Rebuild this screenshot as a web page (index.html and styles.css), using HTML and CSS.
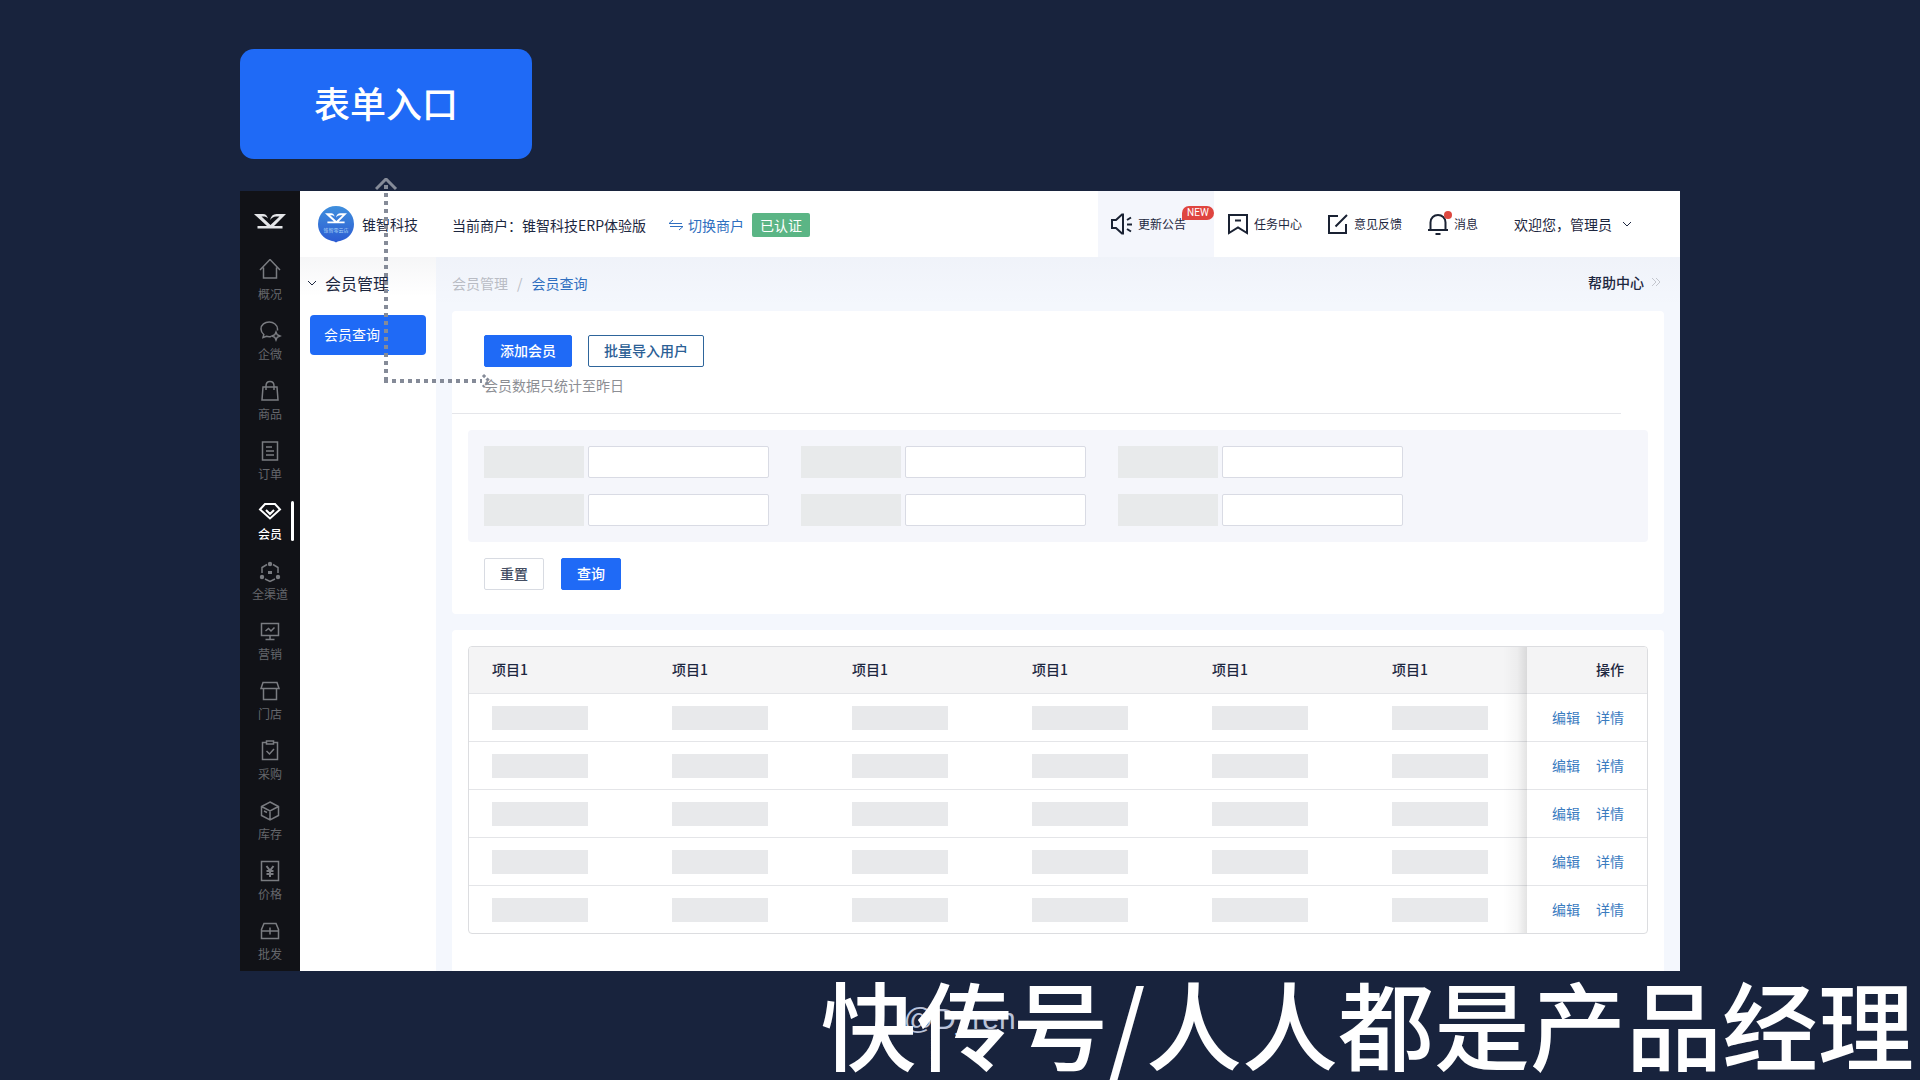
FILE: index.html
```html
<!DOCTYPE html>
<html lang="zh-CN">
<head>
<meta charset="utf-8">
<meta name="viewport" content="width=device-width, initial-scale=1">
<title>会员查询</title>
<link rel="stylesheet" href="styles.css">
</head>
<body>
<svg class="sprite" aria-hidden="true">
  <symbol id="mark" viewBox="0 0 32 15"><path d="M0 0h9c2.500 0 4 1.200 5 4.500C12.500 3.200 11.500 2.600 9.500 2.600H7.500L16.500 11l9-8.400H22c-2.500 0-4 1.200-6 3.400C17 2 19 0 22.500 0H32L20 12h8.500v2.500h-25V12H13L3 2.800C2 1.900 1 1 0 0Z"/></symbol>
</svg>

<div class="stage">
  <h1 class="callout">表单入口</h1>

  <div class="app">
    <nav class="rail" aria-label="主导航">
      <a class="rail-logo" href="#" aria-label="首页"><svg width="32" height="15"><use href="#mark"/></svg></a>
      <a class="rail-item" href="#"><svg class="icon" viewBox="0 0 24 24"><path d="M2 11 12 .5l10 10.500M5.500 8.500V19h13V8.500"/></svg>概况</a>
      <a class="rail-item" href="#"><svg class="icon" viewBox="0 0 24 24"><path d="M13 17.500c-1.500.4-3 .3-4.500-.2L5 18.500l.8-3C4 14 3 12 3 10c0-4.200 3.800-7 8.200-7s8.300 3 8.300 7v1.500M18 13l1.200 2.800L22 17l-2.800 1.200L18 21l-1.200-2.800L14 17l2.800-1.200Z"/></svg>企微</a>
      <a class="rail-item" href="#"><svg class="icon" viewBox="0 0 24 24"><path d="M5 8h14l1 13H4ZM8 11V7c0-2.500 1.500-4.500 4-4.500s4 2 4 4.500v4"/></svg>商品</a>
      <a class="rail-item" href="#"><svg class="icon" viewBox="0 0 24 24"><path d="M4.500 3h15v18h-15ZM8 8h6M8 12h8M8 16h8"/></svg>订单</a>
      <a class="rail-item active" href="#" aria-current="page"><svg class="icon bold" viewBox="0 0 24 24"><path d="M7 5h10l5 5.500-10 9-10-9ZM8 11l4 4 4-4"/></svg>会员</a>
      <a class="rail-item" href="#"><svg class="icon" viewBox="0 0 24 24"><path d="m9 5.500-5 3V14M15 5.500l5 3V14M7 20l5 2.500L17 20"/><g class="solid"><circle cx="12" cy="5" r="2.200"/><circle cx="4" cy="18" r="2.200"/><circle cx="20" cy="18" r="2.200"/><path d="M10 12h4v3h-4Z"/></g></svg>全渠道</a>
      <a class="rail-item" href="#"><svg class="icon" viewBox="0 0 24 24"><path d="M3.500 4.500h17v12h-17ZM12 16.500v4M7.500 20.500h9M7.500 12 10.500 9.500 13 12l3.500-3.500"/></svg>营销</a>
      <a class="rail-item" href="#"><svg class="icon" viewBox="0 0 24 24"><path d="M5 3.500h14l2 6H3ZM5.500 9.500v11h13v-11"/></svg>门店</a>
      <a class="rail-item" href="#"><svg class="icon" viewBox="0 0 24 24"><path d="M8 3.500H4.500v17h15v-17H16M8.500 2h7v3h-7ZM8.500 12l3 3 4.500-5"/></svg>采购</a>
      <a class="rail-item" href="#"><svg class="icon" viewBox="0 0 24 24"><path d="m12 3 8.500 4.500v9L12 21l-8.500-4.500v-9ZM3.500 7.500 12 12l8.500-4.500M12 12v9M6 12l3 1.500"/></svg>库存</a>
      <a class="rail-item" href="#"><svg class="icon" viewBox="0 0 24 24"><path d="M3.500 2.500h17v19h-17Z"/><path class="thick" d="m8.500 7 3.500 4.500L15.500 7M12 11.500V18M8.500 12h7M8.500 15h7"/></svg>价格</a>
      <a class="rail-item" href="#"><svg class="icon" viewBox="0 0 24 24"><path d="M6 4.500h12l2.500 6v9h-17v-9ZM3.500 12h17M12 8.500v7"/></svg>批发</a>
    </nav>

    <div class="body">
      <header class="topbar">
        <a class="brand" href="#">
          <svg width="36" height="38" viewBox="0 0 36 38">
            <defs><linearGradient id="shield" x1="0" y1="0" x2="0" y2="1"><stop offset="0" stop-color="#3f8fdd"/><stop offset="1" stop-color="#2c5bd2"/></linearGradient></defs>
            <path d="M18 1a18 18 0 0 1 18 18c0 8-5 14.500-12.500 16.500-2 .5-4 1-5.500 2-1.500-1-3.500-1.500-5.500-2C5 33.500 0 27 0 19A18 18 0 0 1 18 1Z" fill="url(#shield)"/>
            <use href="#mark" x="7" y="8" width="22" height="11" fill="#fff"/>
            <text class="brand-tag" x="18" y="27" text-anchor="middle">锥智零云店</text>
          </svg>
          <span>锥智科技</span>
        </a>
        <div class="merchant">
          <span>当前商户：锥智科技ERP体验版</span>
          <a class="switch" href="#"><svg width="16" height="16" viewBox="0 0 16 16"><path d="M1 6.500h13M1 6.500 5 3M15 9.500H2M15 9.500 11 13"/></svg>切换商户</a>
          <span class="certified">已认证</span>
        </div>
        <div class="tools">
          <a class="tool highlighted" href="#"><svg class="icon" viewBox="0 0 24 24"><path d="M2 8h4l6-5.500h1v19h-1L6 16H2ZM17 8l4-2.500M17 12.500h5M17 17l4 2.500"/></svg>更新公告<span class="new">NEW</span></a>
          <a class="tool" href="#"><svg class="icon" viewBox="0 0 24 24"><path d="M3 3h18v18l-9-5.500L3 21ZM9 8.500h6"/></svg>任务中心</a>
          <a class="tool" href="#"><svg class="icon" viewBox="0 0 24 24"><path d="M12 4H3v17h17v-9M9.500 14.500 21 3"/></svg>意见反馈</a>
          <a class="tool" href="#"><svg class="icon" viewBox="0 0 24 24"><path d="M4.500 18v-7.500C4.500 6 8 3 12 3s7.500 3 7.500 7.500V18M2 18h20M9.500 22h5"/><circle class="dot" cx="22" cy="3" r="4"/></svg>消息</a>
          <button class="user" type="button">欢迎您，管理员<svg width="10" height="10" viewBox="0 0 10 10"><path d="M1 3l4 4 4-4"/></svg></button>
        </div>
      </header>

      <div class="workspace">
        <aside class="submenu">
          <button class="submenu-title" type="button"><svg width="10" height="10" viewBox="0 0 10 10"><path d="M1 3l4 4 4-4"/></svg>会员管理</button>
          <a class="submenu-item" href="#">会员查询</a>
        </aside>

        <main class="content">
          <div class="crumbs">
            <nav class="crumb-path" aria-label="位置"><a href="#">会员管理</a><span>/</span><a class="current" href="#">会员查询</a></nav>
            <a class="help" href="#">帮助中心<svg width="12" height="12" viewBox="0 0 12 12"><path d="M2 2l4 4-4 4M6 2l4 4-4 4"/></svg></a>
          </div>

          <section class="card">
            <div class="actions">
              <button class="btn primary" type="button">添加会员</button>
              <button class="btn outline" type="button">批量导入用户</button>
            </div>
            <p class="note">会员数据只统计至昨日</p>
            <hr class="rule">
            <form class="filter">
              <div class="fields">
                <div class="field"><label for="f1"></label><input id="f1" type="text"></div>
                <div class="field"><label for="f2"></label><input id="f2" type="text"></div>
                <div class="field"><label for="f3"></label><input id="f3" type="text"></div>
                <div class="field"><label for="f4"></label><input id="f4" type="text"></div>
                <div class="field"><label for="f5"></label><input id="f5" type="text"></div>
                <div class="field"><label for="f6"></label><input id="f6" type="text"></div>
              </div>
              <div class="submit">
                <button class="btn plain" type="reset">重置</button>
                <button class="btn primary" type="button">查询</button>
              </div>
            </form>
          </section>

          <section class="card results">
            <table>
              <thead>
                <tr><th>项目1</th><th>项目1</th><th>项目1</th><th>项目1</th><th>项目1</th><th class="last">项目1</th><th class="ops">操作</th></tr>
              </thead>
              <tbody>
                <tr><td><i></i></td><td><i></i></td><td><i></i></td><td><i></i></td><td><i></i></td><td><i></i></td><td class="ops"><a href="#">编辑</a><a href="#">详情</a></td></tr>
                <tr><td><i></i></td><td><i></i></td><td><i></i></td><td><i></i></td><td><i></i></td><td><i></i></td><td class="ops"><a href="#">编辑</a><a href="#">详情</a></td></tr>
                <tr><td><i></i></td><td><i></i></td><td><i></i></td><td><i></i></td><td><i></i></td><td><i></i></td><td class="ops"><a href="#">编辑</a><a href="#">详情</a></td></tr>
                <tr><td><i></i></td><td><i></i></td><td><i></i></td><td><i></i></td><td><i></i></td><td><i></i></td><td class="ops"><a href="#">编辑</a><a href="#">详情</a></td></tr>
                <tr><td><i></i></td><td><i></i></td><td><i></i></td><td><i></i></td><td><i></i></td><td><i></i></td><td class="ops"><a href="#">编辑</a><a href="#">详情</a></td></tr>
              </tbody>
            </table>
          </section>
        </main>
      </div>
    </div>
  </div>

  <svg class="connector" width="116" height="216" viewBox="0 0 116 216" aria-hidden="true">
    <path class="head" d="M1 11 11 1l10 10"/>
    <path class="dots" d="M11 7v198"/>
    <path class="dots" d="M9 203h98"/>
    <path class="tip" d="m108 197 6 6-6 6"/>
  </svg>
</div>

<footer class="watermark">
  <span class="author">@D_ren</span>
  <span class="source">快传号/人人都是产品经理</span>
</footer>
</body>
</html>
```
FILE: styles.css
```css
* { box-sizing: border-box; }

body {
  margin: 0;
  min-height: 100vh;
  position: relative;
  background: #18233d;
  color: #1d2740;
  font: 14px/20px "Noto Sans CJK SC", "Noto Sans", sans-serif;
}

a { color: inherit; text-decoration: none; }
button { font: inherit; color: inherit; cursor: pointer; }
svg { display: block; fill: none; stroke: currentColor; flex: none; }

.sprite { position: absolute; width: 0; height: 0; }
#mark { fill: inherit; stroke: none; }

.icon { width: 24px; height: 24px; stroke-width: 1.500; }

.stage {
  position: relative;
  padding-top: 49px;
  margin: 0 12.5%;
}

.callout {
  width: 292px;
  margin: 0 0 32px;
  padding: 26px 0 30px;
  border-radius: 14px;
  background: #1f6af6;
  color: #fff;
  font-size: 36px;
  line-height: 54px;
  font-weight: 500;
  text-align: center;
}

.app { display: flex; background: #fff; }

/* Dark icon rail */
.rail { flex: none; width: 60px; background: #111217; color: #77797e; }

.rail-logo {
  display: flex;
  align-items: center;
  justify-content: center;
  height: 60px;
  color: #e4e5e8;
}
.rail-logo svg { fill: currentColor; stroke: none; }

.rail-item {
  position: relative;
  display: flex;
  flex-direction: column;
  align-items: center;
  height: 60px;
  padding-top: 8px;
  color: #65676c;
  font-size: 12px;
  line-height: 22px;
}
.rail-item .icon { color: #7a7c81; }
.rail-item .solid { fill: currentColor; stroke: none; }
.rail-item .thick { stroke-width: 2; }
.rail-item.active, .rail-item.active .icon { color: #fff; }
.rail-item.active { font-weight: 500; }
.icon.bold { stroke-width: 2; }
.rail-item.active::after {
  content: "";
  position: absolute;
  right: 6px;
  top: 10px;
  width: 3px;
  height: 40px;
  border-radius: 2px;
  background: #fff;
}

.body { flex: 1; min-width: 0; display: flex; flex-direction: column; }

/* Top bar */
.topbar {
  display: flex;
  align-items: center;
  height: 66px;
  padding: 0 48px 0 18px;
}
.brand { display: flex; align-items: center; gap: 8px; margin-right: 34px; }
.brand svg { stroke: none; }
.brand-tag { fill: #a9d2f7; font-size: 5px; }
.merchant { display: flex; align-items: center; padding-top: 2px; white-space: nowrap; }
.switch { display: flex; align-items: center; gap: 4px; margin: 0 8px 0 22px; color: #2f6fc0; }
.certified { padding: 2px 8px; border-radius: 2px; background: #5bb585; color: #fff; }

.tools { display: flex; align-items: center; gap: 24px; height: 100%; margin-left: auto; font-size: 12px; white-space: nowrap; }
.tool { position: relative; display: flex; align-items: center; gap: 4px; }
.tool .icon { stroke-width: 2; overflow: visible; color: #1a2233; }
.tool .dot { fill: #dd4840; stroke: none; }
.highlighted { height: 100%; margin-right: -12px; padding: 0 28px 0 12px; background: #f4f6fc; }
.new {
  position: absolute;
  right: 0;
  top: 15px;
  width: 32px;
  border-radius: 7px 7px 7px 0;
  background: #df4540;
  color: #fff;
  font: 10px/14px Roboto, sans-serif;
  text-align: center;
}
.user { display: flex; align-items: center; gap: 10px; margin-left: 12px; padding: 0; border: 0; background: none; font-size: 14px; }

/* Second-level menu */
.workspace { flex: 1; display: flex; background: linear-gradient(rgba(20, 30, 60, .04), rgba(20, 30, 60, 0) 40px), #fff; }
.submenu { flex: none; width: 136px; padding: 14px 10px; }
.submenu-title {
  display: flex;
  align-items: center;
  gap: 8px;
  margin: 0 0 20px -3px;
  padding: 0;
  border: 0;
  background: none;
  font-size: 16px;
  line-height: 24px;
}
.submenu-item { display: block; padding: 9px 14px 11px; border-radius: 4px; background: #1f6af6; color: #fff; }

.content {
  flex: 1;
  min-width: 0;
  padding: 0 16px;
  background: linear-gradient(rgba(20, 30, 60, .02), rgba(20, 30, 60, 0) 50px), #f4f7fd;
}
.crumbs { display: flex; justify-content: space-between; align-items: center; height: 54px; padding-bottom: 2px; }
.crumb-path { display: flex; gap: 9px; color: #b9bcc4; }
.crumb-path .current { color: #2f6fc0; }
.help { display: flex; align-items: center; gap: 6px; padding: 0 2px 2px 0; font-weight: 500; }
.help svg { color: #c3c6ce; }

.card { padding: 24px 16px; border-radius: 4px; background: #fff; }
.actions { display: flex; gap: 16px; padding-left: 16px; }

.btn { height: 32px; padding: 0 15px 2px; border: 1px solid; border-radius: 2px; background: #fff; line-height: 28px; font-weight: 500; }
.primary { border-color: #1f6af6; background: #1f6af6; color: #fff; }
.outline { border-color: #2e659b; color: #2b6095; }
.plain { border-color: #d8dbe2; color: #454e63; }

.note { margin: 8px 0 18px 16px; color: #8c8e94; }
.rule { height: 1px; margin: 0 43px 16px -16px; border: 0; background: #e5e6ea; }
.card .rule { margin-right: 27px; }

.fields { display: flex; flex-wrap: wrap; gap: 16px 32px; padding: 16px; border-radius: 4px; background: #f5f6fb; }
.field { display: flex; gap: 4px; }
.field label { width: 100px; background: #e8eaeb; }
.field input { width: 181px; height: 32px; padding: 0 8px; border: 1px solid #d9dbe4; border-radius: 2px; background: #fff; font: inherit; }
.submit { display: flex; gap: 17px; padding: 16px 0 0 16px; }

/* Result list */
.results { margin-top: 16px; padding: 16px 16px 37px; border-radius: 4px 4px 0 0; }
table {
  width: 100%;
  table-layout: fixed;
  border: 1px solid #dcdde0;
  border-radius: 4px;
  border-spacing: 0;
  overflow: hidden;
}
th, td { height: 48px; padding: 0 0 0 23px; text-align: left; border-bottom: 1px solid #e4e5e8; }
tr:last-child td { height: 47px; border-bottom: 0; }
thead th { height: 47px; padding-bottom: 2px; background: #f4f4f5; font-weight: 500; }
th.last { width: 158px; }
.ops { position: relative; width: 120px; padding: 0 23px 2px 0; text-align: right; color: #3a7bbf; }
thead .ops { padding-left: 0; color: #1d2740; }
.ops a + a { margin-left: 16px; }
.ops::before {
  content: "";
  position: absolute;
  right: 100%;
  top: 0;
  bottom: -1px;
  width: 24px;
  background: linear-gradient(to left, rgba(0, 0, 0, .11), rgba(0, 0, 0, .03) 40%, rgba(0, 0, 0, 0));
}
td i { display: block; width: 96px; height: 24px; background: #e8e9eb; }

/* Dotted guide from the list area up to the callout */
.connector { position: absolute; left: 135px; top: 178px; color: #858b98; pointer-events: none; }
.connector .head { stroke-width: 3; }
.connector .dots { stroke-width: 4; stroke-dasharray: 4 4; }
.connector .tip { stroke-width: 3; stroke-dasharray: 3 2; }

/* Watermark in the page corner */
.watermark { position: absolute; right: 0; bottom: 0; color: #fff; white-space: nowrap; }
.source { position: relative; display: block; padding: 0 6px 4px 0; font-size: 96px; line-height: 108px; font-weight: 500; }
.author { position: absolute; left: 83px; top: 34px; color: #b9c1d8; font: 30px/34px "Liberation Sans", sans-serif; }
```
